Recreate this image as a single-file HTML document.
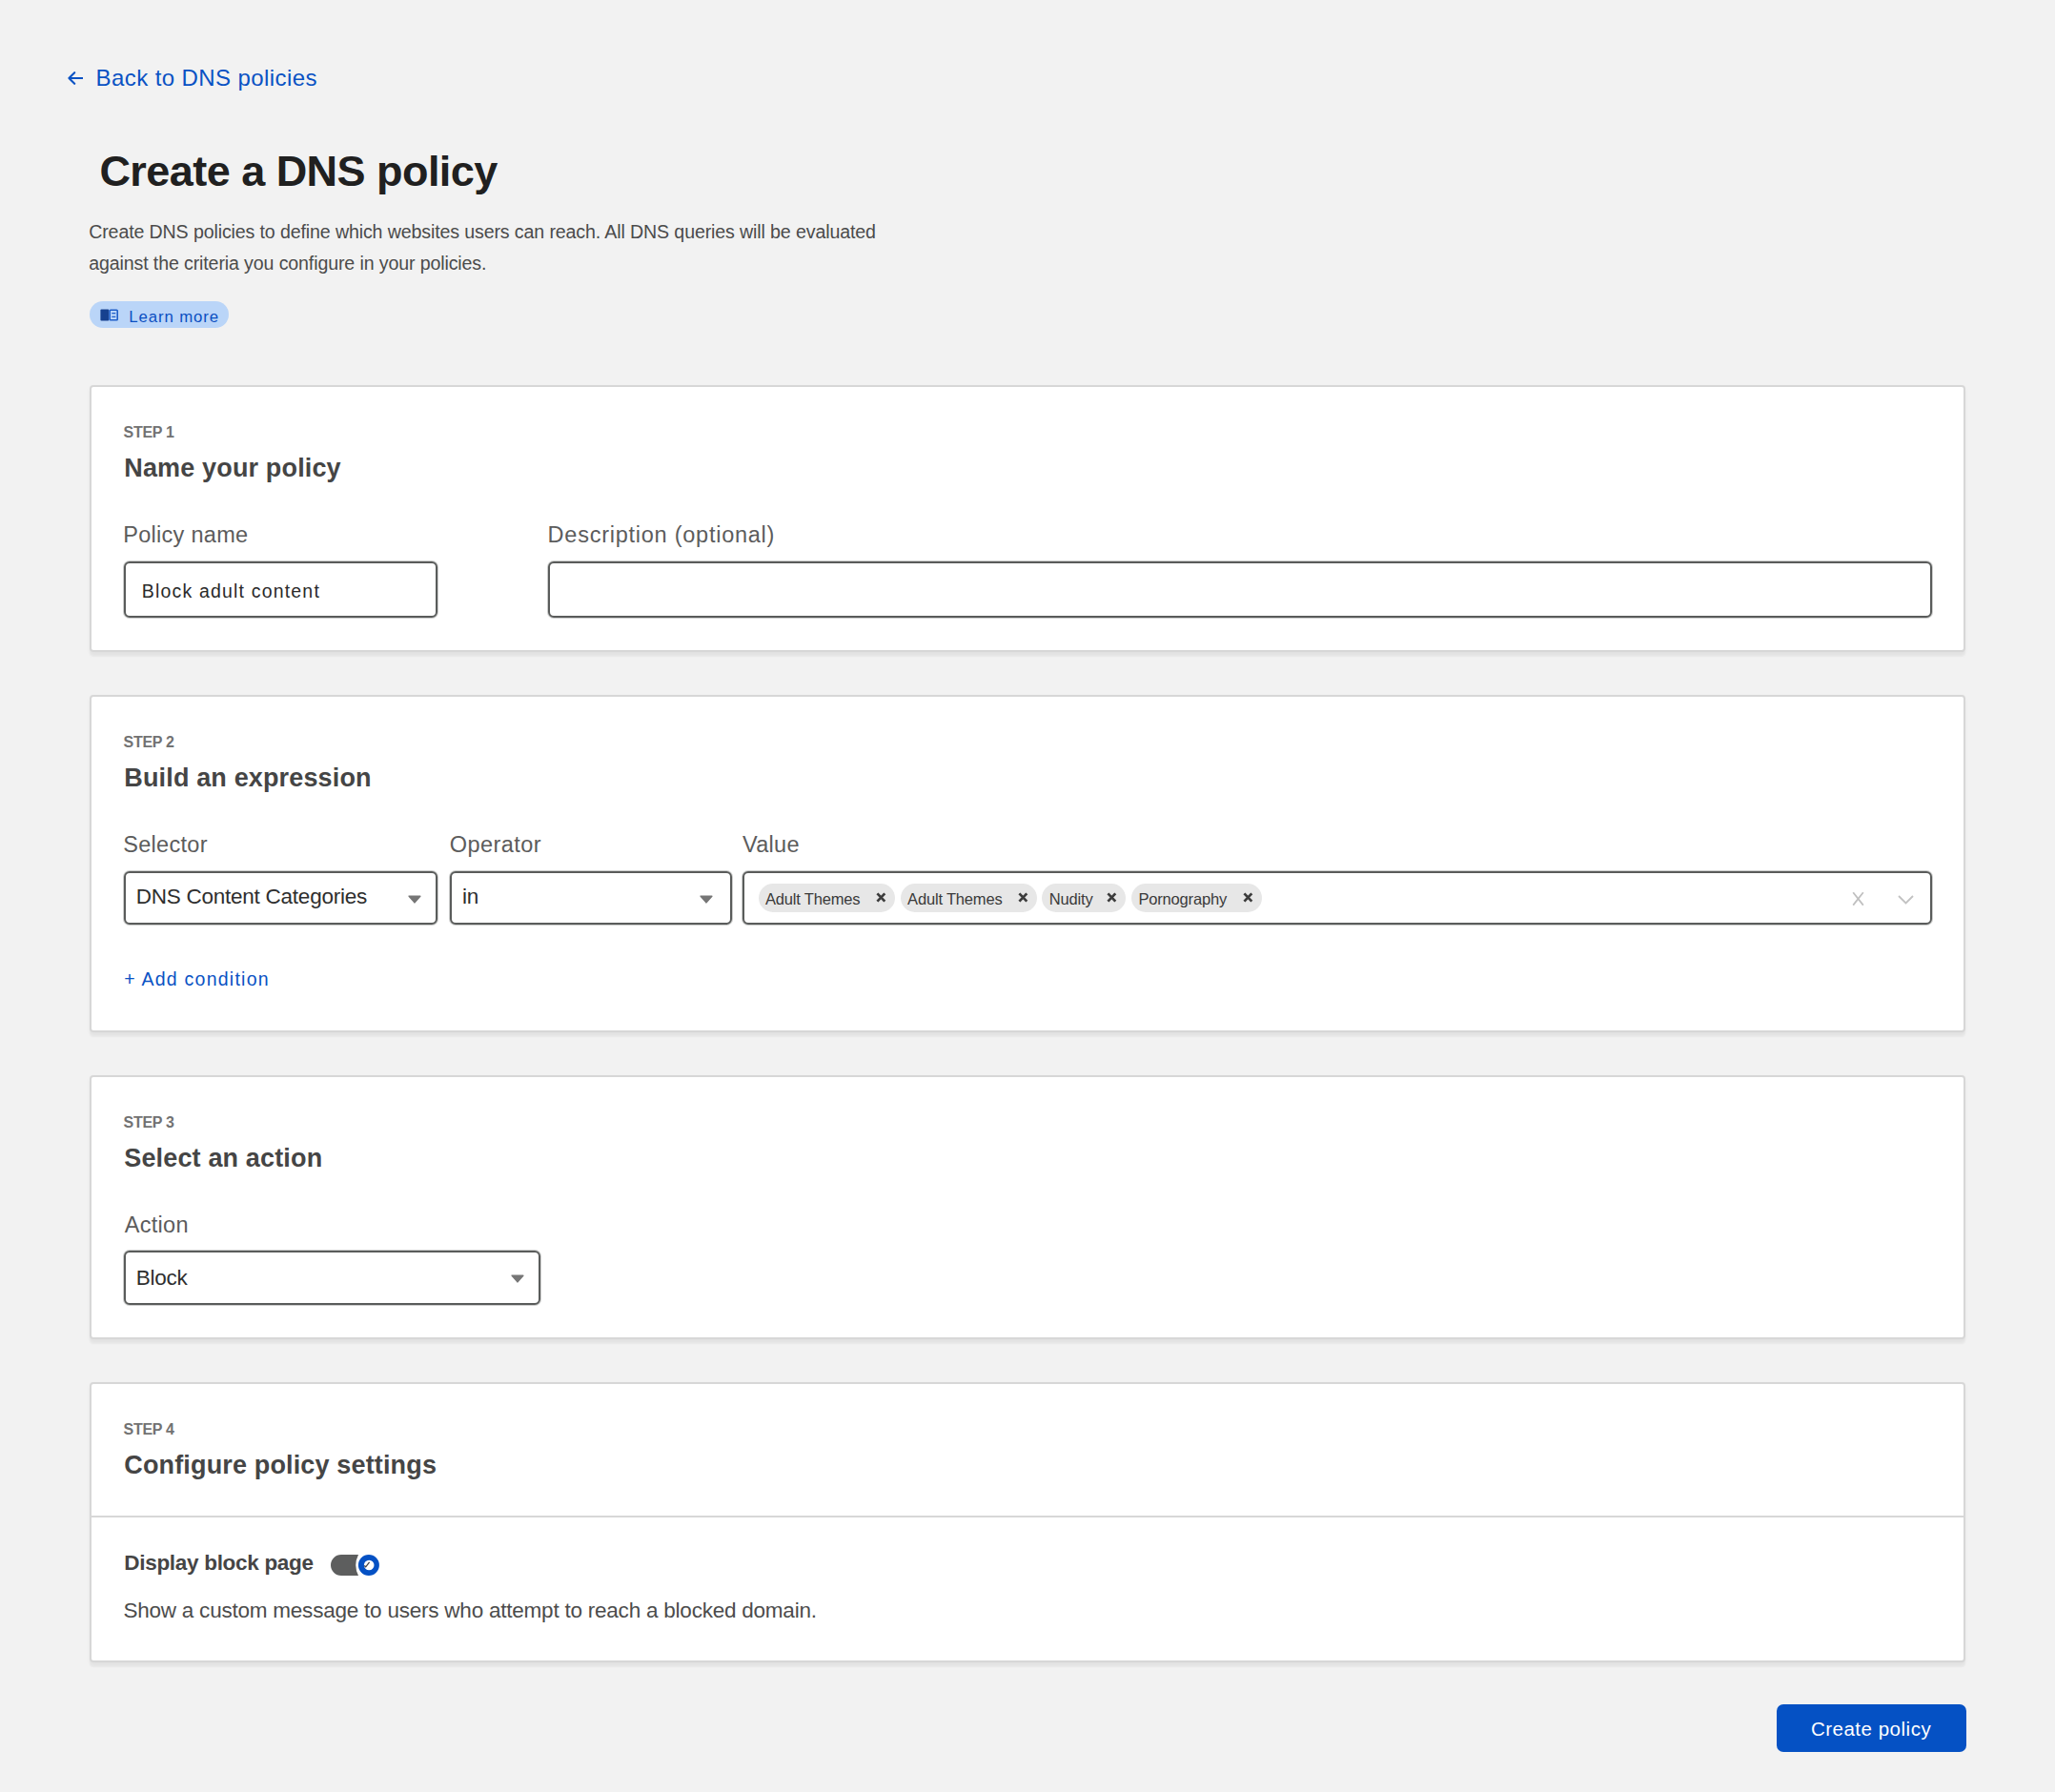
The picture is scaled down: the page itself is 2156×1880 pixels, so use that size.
<!DOCTYPE html>
<html>
<head>
<meta charset="utf-8">
<title>Create a DNS policy</title>
<style>
html,body{margin:0;padding:0;}
body{width:2156px;height:1880px;background:#f2f2f2;font-family:"Liberation Sans",sans-serif;position:relative;overflow:hidden;}
.t{position:absolute;white-space:nowrap;line-height:1;}
.back{left:100.6px;top:69.9px;color:#0a52c4;font-size:24px;letter-spacing:0.41px;}
h1{position:absolute;margin:0;left:104.4px;top:156.6px;font-size:45px;font-weight:bold;color:#202020;line-height:1;white-space:nowrap;letter-spacing:-0.54px;}
.lead{position:absolute;left:93.2px;top:227.3px;font-size:19.6px;color:#4b4b4b;line-height:33px;width:880px;letter-spacing:-0.125px;}
.pill{position:absolute;left:94px;top:316px;width:146px;height:28px;border-radius:14px;background:#bad5f8;}
.pill .t{left:41.3px;top:8.8px;font-size:16.8px;color:#0b4fc2;letter-spacing:0.88px;}
.card{position:absolute;left:94px;width:1968px;box-sizing:border-box;background:#fff;border:2px solid #d7d7d7;border-radius:4px;box-shadow:0 5px 2px rgba(0,0,0,0.04),0 2px 5px rgba(0,0,0,0.04);}
.step{left:33.6px;top:40px;font-size:16px;font-weight:bold;color:#727272;letter-spacing:-0.3px;}
.ttl{left:34.3px;top:71.8px;font-size:27px;font-weight:bold;color:#454545;letter-spacing:0.15px;}
.lbl{top:143.8px;font-size:23.5px;color:#5c5c5c;letter-spacing:0.3px;}
.inp{position:absolute;box-sizing:border-box;border:2px solid #5a5c5b;border-radius:6px;background:#fff;box-shadow:0 0 0 1px rgba(90,92,91,0.3);}
.val{font-size:22.5px;color:#2e2e2e;letter-spacing:-0.25px;}
.tri{position:absolute;}
.chip{position:absolute;top:11px;height:30px;border-radius:15px;background:#e7e7e7;}
.chip .t{left:7.4px;top:7.7px;font-size:16.5px;color:#3a3a3a;letter-spacing:-0.17px;}
.chip svg{position:absolute;top:9.3px;}
.link{color:#0a52c4;}
.btn{position:absolute;left:1864px;top:1788px;width:199px;height:49.5px;border-radius:7px;background:#0551c4;}
.btn .t{left:35.9px;top:15.5px;color:#fff;font-size:20.5px;letter-spacing:0.51px;}
</style>
</head>
<body>

<svg style="position:absolute;left:71px;top:75px" width="16" height="14" viewBox="0 0 16 14"><path d="M7.2 1.2 L1.4 7 L7.2 12.8 M1.4 7 H15.5" fill="none" stroke="#0a52c4" stroke-width="2.1" stroke-linecap="round" stroke-linejoin="round"/></svg>
<div class="t back">Back to DNS policies</div>

<h1>Create a DNS policy</h1>
<div class="lead">Create DNS policies to define which websites users can reach. All DNS queries will be evaluated against the criteria you configure in your policies.</div>

<div class="pill"><svg style="position:absolute;left:10.5px;top:8.3px" width="19" height="13" viewBox="0 0 19 13"><rect x="0.4" y="0.6" width="8.9" height="11.8" rx="1" fill="#17418f"/><rect x="10.2" y="1.3" width="8" height="10.5" rx="0.8" fill="none" stroke="#1f5fc8" stroke-width="1.6"/><path d="M12.3 4.6h4M12.3 8.4h4" stroke="#1f5fc8" stroke-width="1.4"/></svg><div class="t">Learn more</div></div>

<!-- Card 1 -->
<div class="card" style="top:404px;height:280px;">
  <div class="t step">STEP 1</div>
  <div class="t ttl">Name your policy</div>
  <div class="t lbl" style="left:33.2px;">Policy name</div>
  <div class="t lbl" style="left:478.6px;letter-spacing:0.75px;">Description (optional)</div>
  <div class="inp" style="left:34px;top:183px;width:329px;height:59px;">
    <div class="t" style="left:16.8px;top:19.8px;font-size:19.5px;color:#2a2a2a;letter-spacing:1.18px;">Block adult content</div>
  </div>
  <div class="inp" style="left:479px;top:183px;width:1452px;height:59px;"></div>
</div>

<!-- Card 2 -->
<div class="card" style="top:729px;height:354px;">
  <div class="t step">STEP 2</div>
  <div class="t ttl">Build an expression</div>
  <div class="t lbl" style="left:33.2px;">Selector</div>
  <div class="t lbl" style="left:375.7px;letter-spacing:0.45px;">Operator</div>
  <div class="t lbl" style="left:683px;">Value</div>
  <div class="inp" style="left:34px;top:183px;width:329px;height:56px;">
    <div class="t val" style="left:10.8px;top:14.4px;">DNS Content Categories</div>
    <svg class="tri" style="left:295.9px;top:22.7px" width="14" height="9" viewBox="0 0 14 9"><path d="M1.2 1.2 H12.8 L7 7.8 Z" fill="#767676" stroke="#767676" stroke-width="1.6" stroke-linejoin="round"/></svg>
  </div>
  <div class="inp" style="left:376px;top:183px;width:296px;height:56px;">
    <div class="t val" style="left:11px;top:14.2px;">in</div>
    <svg class="tri" style="left:259.9px;top:22.7px" width="14" height="9" viewBox="0 0 14 9"><path d="M1.2 1.2 H12.8 L7 7.8 Z" fill="#767676" stroke="#767676" stroke-width="1.6" stroke-linejoin="round"/></svg>
  </div>
  <div class="inp" style="left:683px;top:183px;width:1248px;height:56px;">
    <div class="chip" style="left:14.6px;width:143px;"><div class="t">Adult Themes</div><svg style="left:123.8px" width="11" height="11" viewBox="0 0 11 11"><path d="M1.4 1.3L9.3 9.7M9.3 1.3L1.4 9.7" stroke="#3c3c3c" stroke-width="2.7"/></svg></div>
    <div class="chip" style="left:163.7px;width:143px;"><div class="t">Adult Themes</div><svg style="left:123.8px" width="11" height="11" viewBox="0 0 11 11"><path d="M1.4 1.3L9.3 9.7M9.3 1.3L1.4 9.7" stroke="#3c3c3c" stroke-width="2.7"/></svg></div>
    <div class="chip" style="left:312.4px;width:87.3px;"><div class="t">Nudity</div><svg style="left:67.7px" width="11" height="11" viewBox="0 0 11 11"><path d="M1.4 1.3L9.3 9.7M9.3 1.3L1.4 9.7" stroke="#3c3c3c" stroke-width="2.7"/></svg></div>
    <div class="chip" style="left:406px;width:137px;"><div class="t">Pornography</div><svg style="left:117.4px" width="11" height="11" viewBox="0 0 11 11"><path d="M1.4 1.3L9.3 9.7M9.3 1.3L1.4 9.7" stroke="#3c3c3c" stroke-width="2.7"/></svg></div>
    <svg style="position:absolute;left:1162.4px;top:18.8px" width="13" height="16" viewBox="0 0 13 16"><path d="M1.2 1.2L11.8 14.6M11.8 1.2L1.2 14.6" stroke="#c0c0c0" stroke-width="1.8"/></svg>
    <svg style="position:absolute;left:1209.8px;top:22.8px" width="17" height="10" viewBox="0 0 17 10"><path d="M1 1L8.5 8.5L16 1" fill="none" stroke="#c2c2c2" stroke-width="1.8"/></svg>
  </div>
  <div class="t link" style="left:34.2px;top:286.9px;font-size:19.5px;letter-spacing:1.25px;">+ Add condition</div>
</div>

<!-- Card 3 -->
<div class="card" style="top:1128px;height:277px;">
  <div class="t step">STEP 3</div>
  <div class="t ttl">Select an action</div>
  <div class="t lbl" style="left:34.7px;">Action</div>
  <div class="inp" style="left:34px;top:182px;width:437px;height:57px;">
    <div class="t val" style="left:10.8px;top:16.3px;">Block</div>
    <svg class="tri" style="left:403.5px;top:23.3px" width="14" height="9" viewBox="0 0 14 9"><path d="M1.2 1.2 H12.8 L7 7.8 Z" fill="#767676" stroke="#767676" stroke-width="1.6" stroke-linejoin="round"/></svg>
  </div>
</div>

<!-- Card 4 -->
<div class="card" style="top:1450px;height:294px;">
  <div class="t step">STEP 4</div>
  <div class="t ttl">Configure policy settings</div>
  <div style="position:absolute;left:0;right:0;top:138px;height:2px;background:#d7d7d7;"></div>
  <div class="t" style="left:34.3px;top:177.2px;font-size:22.5px;font-weight:bold;color:#454545;letter-spacing:-0.3px;">Display block page</div>
  <svg style="position:absolute;left:251px;top:179px" width="52" height="22" viewBox="0 0 52 22"><path d="M11 0 H29 A24.6 24.6 0 0 0 29 22 H11 A11 11 0 0 1 11 0 Z" fill="#5d5e5e"/><circle cx="39.9" cy="11" r="11" fill="#0551c4"/><circle cx="40.2" cy="11" r="5.3" fill="#fff"/><path d="M35.2 11.4 L36.7 12.8 L40.6 7.8" fill="none" stroke="#444" stroke-width="1.3"/></svg>
  <div class="t" style="left:33.4px;top:227.2px;font-size:22.5px;color:#4c4c4c;letter-spacing:-0.225px;">Show a custom message to users who attempt to reach a blocked domain.</div>
</div>

<div class="btn"><div class="t">Create policy</div></div>

</body>
</html>
